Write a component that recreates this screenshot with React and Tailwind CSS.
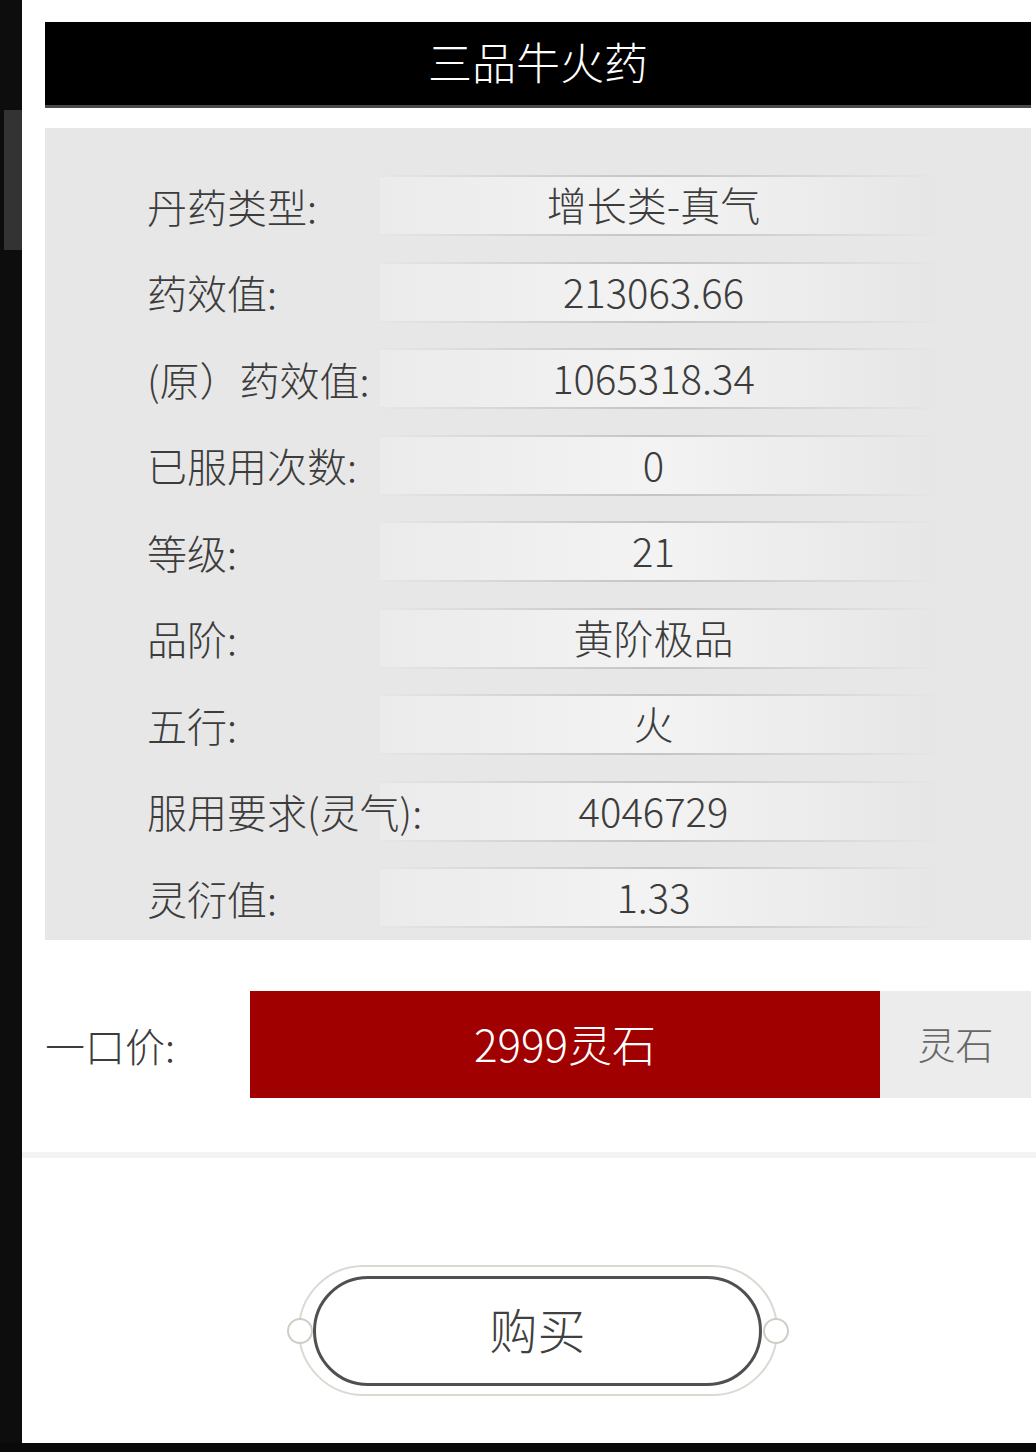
import React from "react";

const rows = [
  ["丹药类型:", "增长类-真气"],
  ["药效值:", "213063.66"],
  ["(原）药效值:", "1065318.34"],
  ["已服用次数:", "0"],
  ["等级:", "21"],
  ["品阶:", "黄阶极品"],
  ["五行:", "火"],
  ["服用要求(灵气):", "4046729"],
  ["灵衍值:", "1.33"],
];

const font = { fontFamily: '"Noto Sans CJK SC", "Noto Sans", sans-serif' };

function Row({ label, value }) {
  return (
    <div className="flex h-[61px] items-center">
      <div className="relative z-10 w-[233px] shrink-0 overflow-visible text-[40px] font-light leading-none text-[#3c3c3c] whitespace-nowrap">
        {label}
      </div>
      <div className="relative flex h-[61px] w-[555px] items-center justify-center bg-gradient-to-r from-[#ebebeb] via-[#f3f3f3] to-[#e6e6e6] pr-[8px]">
        <div className="absolute left-0 right-0 top-0 h-[2px] bg-gradient-to-r from-[#e6e6e6] via-[#c4c4c4] to-[#e6e6e6]" />
        <div className="absolute left-0 right-0 bottom-0 h-[2px] bg-gradient-to-r from-[#e6e6e6] via-[#c4c4c4] to-[#e6e6e6]" />
        <span className="-mt-[3px] text-[40px] font-light leading-none text-[#3c3c3c]">{value}</span>
      </div>
    </div>
  );
}

export default function App() {
  return (
    <div className="flex w-[1036px] flex-col bg-[#0a0a0a]" style={font}>
      <div className="flex h-[1443px]">
        <div className="w-[22px] shrink-0 bg-[#0d0d0d] pt-[110px] pl-[4px]">
          <div className="h-[140px] w-[18px] bg-[#333333]" />
        </div>
        <div className="flex flex-1 flex-col bg-white">
          <div className="flex flex-col pl-[23px] pr-[5px]">
            <div className="mt-[22px] flex h-[86px] items-center justify-center border-b-[3px] border-[#4a4a4a] bg-black">
              <span className="-mt-[5px] text-[44px] font-light leading-none text-white">三品牛火药</span>
            </div>
            <div className="mt-[20px] flex h-[812px] flex-col gap-[25.5px] bg-[#e7e7e7] pl-[102px] pt-[47px]">
              {rows.map(([l, v]) => (
                <Row key={l} label={l} value={v} />
              ))}
            </div>
            <div className="mt-[51px] flex h-[107px] items-center">
              <div className="w-[205px] shrink-0 text-[40px] font-light leading-none text-[#3c3c3c]">一口价:</div>
              <div className="flex h-full w-[630px] items-center justify-center bg-[#a00000]">
                <span className="-mt-[4px] text-[44px] font-light leading-none text-white">2999灵石</span>
              </div>
              <div className="flex h-full w-[151px] items-center justify-center bg-[#ececec]">
                <span className="-mt-[4px] text-[38px] font-light leading-none text-[#666666]">灵石</span>
              </div>
            </div>
          </div>
          <div className="mt-[54px] h-[6px] bg-[#f3f3f3]" />
          <div className="flex justify-center pl-[17px] pt-[107px]">
            <div className="relative flex h-[131px] w-[480px] items-center justify-center rounded-full border-2 border-[#dcd9d3] bg-white">
              <div className="absolute -left-[13px] top-1/2 h-[26px] w-[26px] -translate-y-1/2 rounded-full border-2 border-[#d0cdc6] bg-white" />
              <div className="absolute -right-[13px] top-1/2 h-[26px] w-[26px] -translate-y-1/2 rounded-full border-2 border-[#d0cdc6] bg-white" />
              <div className="relative flex h-[110px] w-[449px] items-center justify-center rounded-full border-[3px] border-[#505050] bg-white">
                <span className="-mt-[6px] text-[48px] font-light leading-none text-[#404040]">购买</span>
              </div>
            </div>
          </div>
        </div>
      </div>
      <div className="h-[9px] bg-[#0a0a0a]" />
    </div>
  );
}
